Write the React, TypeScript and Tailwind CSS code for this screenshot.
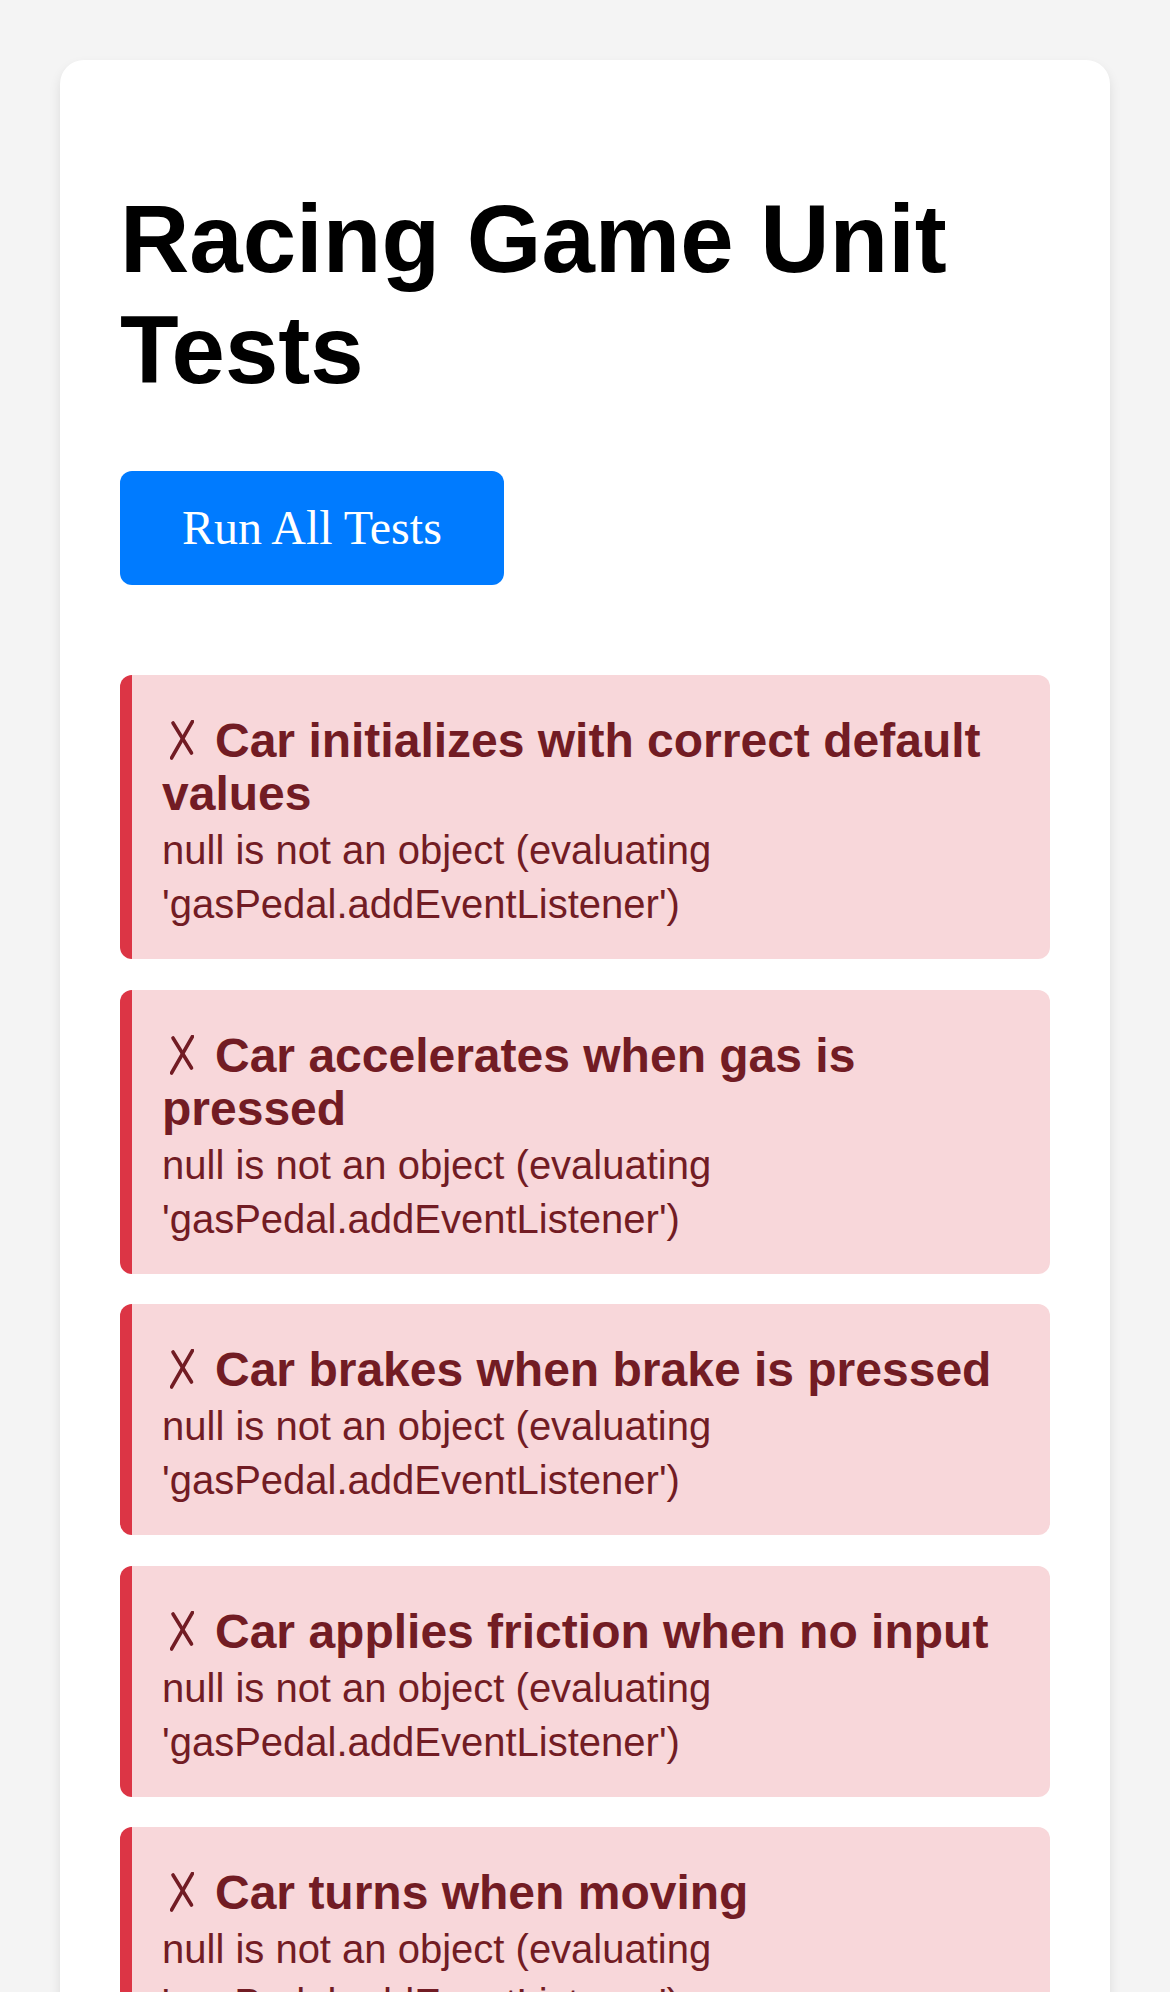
import React from "react";

const tests = [
  "Car initializes with correct default values",
  "Car accelerates when gas is pressed",
  "Car brakes when brake is pressed",
  "Car applies friction when no input",
  "Car turns when moving",
  "Car stays within track boundaries",
];

function Cross() {
  return (
    <svg
      aria-label="✗"
      role="img"
      width="24"
      height="40"
      viewBox="0 0 24 40"
      className="ml-[8px] mr-[21px] inline-block align-[-3px]"
    >
      <line x1="3" y1="3" x2="21.5" y2="33" stroke="#721c24" strokeWidth="3.6" strokeLinecap="round" />
      <line x1="22.5" y1="1.5" x2="1.5" y2="38" stroke="#721c24" strokeWidth="3.6" strokeLinecap="round" />
    </svg>
  );
}

export default function App() {
  return (
    <div
      className="min-h-screen bg-[#f4f4f4] p-[60px] text-black"
      style={{ fontFamily: '"Liberation Sans", Arial, sans-serif' }}
    >
      <div className="rounded-[24px] bg-white px-[60px] pb-[60px] pt-[123px] shadow-[0_6px_12px_rgba(0,0,0,0.1)]">
        <h1 className="mb-[66px] text-[96px] font-bold leading-[111px]">
          Racing Game Unit Tests
        </h1>
        <button
          className="rounded-[12px] bg-[#007bff] px-[62px] py-[30px] text-[48px] leading-[54px] text-white"
          style={{ fontFamily: '"Liberation Serif", "Times New Roman", serif' }}
        >
          Run All Tests
        </button>
        <div className="mt-[90px] flex flex-col gap-[30.5px]">
          {tests.map((t) => (
            <div
              key={t}
              className="rounded-[12px] border-l-[12px] border-[#dc3545] bg-[#f8d7da] pb-[28px] pl-[30px] pr-[30px] pt-[39px] text-[#721c24]"
            >
              <div className="mb-[3px] text-[48px] font-bold leading-[53px]">
                <Cross />
                {t}
              </div>
              <div className="text-[40px] leading-[54px]">
                null is not an object (evaluating 'gasPedal.addEventListener')
              </div>
            </div>
          ))}
        </div>
      </div>
    </div>
  );
}
